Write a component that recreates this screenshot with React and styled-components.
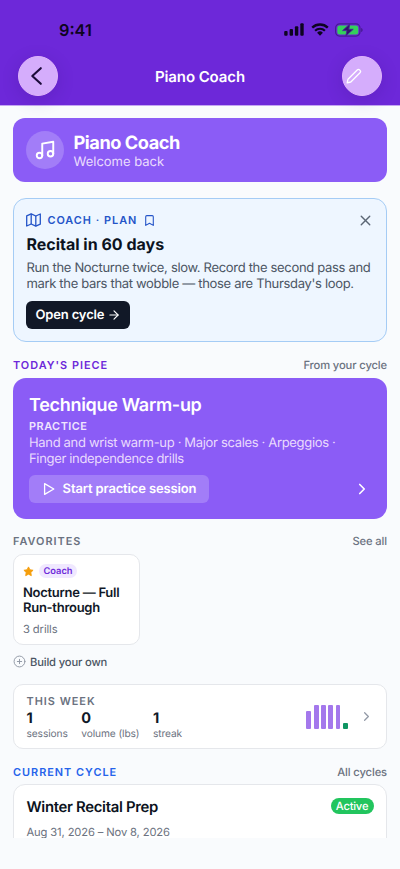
import React from "react";
import styled, { createGlobalStyle } from "styled-components";
import {
  ArrowRight,
  Bookmark,
  ChevronRight,
  CirclePlus,
  Music,
  X,
} from "lucide-react";

const GlobalStyle = createGlobalStyle`
  * {
    box-sizing: border-box;
  }

  body {
    margin: 0;
    background: #f9fbfd;
    font-family: Inter, "Liberation Sans", sans-serif;
    text-rendering: geometricPrecision;
    -webkit-font-smoothing: antialiased;
  }

  h1, h2, h3, p {
    margin: 0;
  }

  button {
    font-family: inherit;
    text-rendering: inherit;
    border: 0;
    padding: 0;
  }

  svg {
    display: block;
    flex-shrink: 0;
  }
`;

const Screen = styled.div`
  display: flex;
  flex-direction: column;
  width: 400px;
  height: 869px;
  overflow: hidden;
  background: #f9fbfd;
`;

const Header = styled.header`
  flex-shrink: 0;
  height: 106px;
  background: #6d28d9;
  border-bottom: 1px solid #c4a6f2;
`;

const StatusBar = styled.div`
  display: flex;
  align-items: center;
  justify-content: space-between;
  height: 56px;
  padding: 3px 37px 0 59px;
  color: #0d0420;
`;

const Clock = styled.span`
  font-size: 16.3px;
  font-weight: 600;
`;

const StatusIcons = styled.div`
  display: flex;
  align-items: center;
  gap: 6px;
`;

const NavBar = styled.div`
  display: flex;
  align-items: center;
  justify-content: space-between;
  height: 40.6px;
  padding: 0 18px;
`;

const NavTitle = styled.h1`
  color: #fff;
  font-size: 15px;
  font-weight: 600;
  letter-spacing: -0.1px;
`;

const RoundButton = styled.button`
  display: flex;
  align-items: center;
  justify-content: ${(props) => (props.$start ? "flex-start" : "center")};
  width: 40px;
  height: 40px;
  padding-left: ${(props) => (props.$start ? "3px" : "0")};
  border: 1px solid #e0b4fb;
  border-radius: 50%;
  background: #d5adfc;
  color: ${(props) => (props.$start ? "#fff" : "#1c0a3a")};
  box-shadow: 0 4px 18px rgba(40, 10, 90, 0.16);
`;

const Content = styled.main`
  display: flex;
  flex-direction: column;
  height: 732px;
  padding: 12px 13px 0;
  overflow: hidden;
`;

const Banner = styled.section`
  display: flex;
  align-items: center;
  flex-shrink: 0;
  gap: 10px;
  height: 64px;
  padding: 0 12.5px;
  border-radius: 12px;
  background: #8b5cf6;
  color: #fff;
`;

const BannerIcon = styled.div`
  display: flex;
  align-items: center;
  justify-content: center;
  width: 38px;
  height: 38px;
  border-radius: 50%;
  background: #a27df8;
`;

const BannerCopy = styled.div`
  padding-top: 2px;
`;

const BannerTitle = styled.h2`
  font-size: 18.2px;
  font-weight: 700;
  line-height: 21px;
  letter-spacing: -0.45px;
`;

const BannerText = styled.p`
  color: #eadcfd;
  font-size: 13px;
  line-height: 16px;
`;

const PlanCard = styled.section`
  flex-shrink: 0;
  height: 144px;
  margin-top: 16px;
  padding: 12px 12.4px;
  border: 1px solid #a5ccf5;
  border-radius: 13px;
  background: #eef6ff;
`;

const PlanTop = styled.div`
  display: flex;
  align-items: center;
  height: 18px;
  color: #2454c8;

  svg:last-child {
    margin-left: auto;
    color: #5b6675;
  }
`;

const Overline = styled.span`
  color: ${(props) => props.$color || "#6b7280"};
  font-size: 10.9px;
  font-weight: 600;
  line-height: 14px;
  letter-spacing: ${(props) => props.$tracking || "1px"};
`;

const PlanLabel = styled(Overline)`
  margin: 0 6px 0 6px;
`;

const PlanTitle = styled.h2`
  margin-top: 5px;
  color: #0b1220;
  font-size: 16px;
  font-weight: 700;
  line-height: 20px;
`;

const PlanText = styled.p`
  margin-top: 7px;
  color: #4b5563;
  font-size: 13px;
  line-height: 15.5px;
  letter-spacing: -0.32px;
  white-space: nowrap;
`;

const DarkButton = styled.button`
  display: flex;
  align-items: center;
  justify-content: center;
  gap: 3px;
  width: 104px;
  height: 28px;
  margin-top: 8.5px;
  border-radius: 6px;
  background: #111827;
  color: #fff;
  font-size: 13px;
  font-weight: 600;
  letter-spacing: -0.15px;
`;

const SectionHead = styled.div`
  display: flex;
  align-items: center;
  justify-content: space-between;
  flex-shrink: 0;
  height: 14px;
  margin-top: 15.5px;
`;

const SectionLink = styled.span`
  color: #6b7280;
  font-size: 11.2px;
  font-weight: 500;
  letter-spacing: -0.12px;
`;

const PieceCard = styled.section`
  flex-shrink: 0;
  height: 141px;
  margin-top: 6px;
  padding: 17.5px 16px 0;
  border-radius: 13px;
  background: #8b5cf6;
  color: #fff;
`;

const PieceTitle = styled.h2`
  font-size: 18px;
  font-weight: 600;
  line-height: 21px;
  letter-spacing: -0.3px;
`;

const PieceText = styled.p`
  color: #e9dafd;
  font-size: 13px;
  line-height: 15.5px;
  letter-spacing: -0.33px;
  white-space: nowrap;
`;

const PieceKind = styled(Overline)`
  display: block;
  margin: 3px 0;
`;

const PieceActions = styled.div`
  display: flex;
  align-items: center;
  justify-content: space-between;
  margin-top: 8px;
`;

const StartButton = styled.button`
  display: flex;
  align-items: center;
  gap: 7px;
  width: 180px;
  height: 28px;
  padding-left: 12.6px;
  border-radius: 6px;
  background: #a27df8;
  color: #fff;
  font-size: 13px;
  font-weight: 600;
  letter-spacing: -0.15px;
  white-space: nowrap;
`;

const FavoriteCard = styled.section`
  flex-shrink: 0;
  width: 127px;
  height: 91px;
  margin-top: 5.5px;
  padding: 9.5px 9px;
  border: 1px solid #e5e7eb;
  border-radius: 10px;
  background: #fff;
`;

const FavoriteTop = styled.div`
  display: flex;
  align-items: center;
  gap: 5px;
  height: 14px;
`;

const CoachTag = styled.span`
  height: 14px;
  padding: 0 4.5px;
  border-radius: 7px;
  background: #f0e8ff;
  color: #6d28d9;
  font-size: 9.3px;
  font-weight: 600;
  line-height: 15px;
`;

const FavoriteTitle = styled.h3`
  margin-top: 7.5px;
  color: #111827;
  font-size: 13px;
  font-weight: 600;
  line-height: 15.5px;
  letter-spacing: -0.27px;
`;

const FavoriteMeta = styled.p`
  margin-top: 5px;
  color: #6b7280;
  font-size: 11.2px;
  line-height: 14px;
  letter-spacing: -0.1px;
`;

const BuildRow = styled.div`
  display: flex;
  align-items: center;
  flex-shrink: 0;
  gap: 4px;
  height: 14px;
  margin-top: 10px;
  color: #4b5563;
  font-size: 11.2px;
  font-weight: 500;
  letter-spacing: -0.15px;

  svg {
    color: #9299a6;
  }
`;

const WeekCard = styled.section`
  display: flex;
  align-items: center;
  flex-shrink: 0;
  height: 65px;
  margin-top: 15px;
  padding: 0 12.5px;
  border: 1px solid #e5e7eb;
  border-radius: 10px;
  background: #fff;
`;

const WeekInfo = styled.div`
  display: flex;
  flex-direction: column;
  flex: 1;
  padding-top: 2px;
`;

const Stats = styled.div`
  display: flex;
  gap: 13.5px;
  padding-top: 2px;
`;

const StatValue = styled.div`
  color: #111827;
  font-size: 14.5px;
  font-weight: 700;
  line-height: 18px;
`;

const StatLabel = styled.div`
  color: #6b7280;
  font-size: 10.2px;
  line-height: 13px;
  letter-spacing: -0.1px;
`;

const Bars = styled.div`
  display: flex;
  align-items: flex-end;
  gap: 2.4px;
  height: 24px;
  margin: 1.5px 10.8px 0 0;
`;

const Bar = styled.span`
  width: 4.9px;
  height: ${(props) => props.$height}px;
  border-radius: 1px;
  background: ${(props) => (props.$current ? "#0f9663" : "#a478ec")};
`;

const CycleCard = styled.section`
  flex-shrink: 0;
  height: 90px;
  margin-top: 5px;
  padding: 12px 12.5px;
  border: 1px solid #e5e7eb;
  border-radius: 12px;
  background: #fff;
`;

const CycleHead = styled(SectionHead)`
  margin-top: 16px;
`;

const CycleTop = styled.div`
  display: flex;
  align-items: center;
  justify-content: space-between;
  height: 20px;
`;

const CycleTitle = styled.h3`
  color: #0b1220;
  font-size: 14.9px;
  font-weight: 600;
  letter-spacing: -0.32px;
`;

const ActiveTag = styled.span`
  width: 43px;
  height: 16px;
  margin-top: -2px;
  border-radius: 8px;
  background: #22c55e;
  color: #fff;
  font-size: 11.2px;
  font-weight: 500;
  line-height: 16px;
  letter-spacing: -0.2px;
  text-align: center;
`;

const CycleDates = styled.p`
  margin-top: 8px;
  color: #6b7280;
  font-size: 11.2px;
  line-height: 14px;
  letter-spacing: -0.13px;
`;

const SignalIcon = () => (
  <svg width="21" height="13" viewBox="0 0 21 13" fill="currentColor">
    <rect x="0.2" y="8" width="3.4" height="4.7" rx="1" />
    <rect x="5.6" y="6" width="3.4" height="6.7" rx="1" />
    <rect x="10.9" y="3.3" width="3.4" height="9.4" rx="1" />
    <rect x="16.3" y="0.3" width="3.4" height="12.4" rx="1" />
  </svg>
);

const WifiIcon = () => (
  <svg width="18" height="13" viewBox="0 0 18 13" fill="none" stroke="currentColor">
    <path d="M1.2 4.6a11.4 11.4 0 0 1 15.6 0" strokeWidth="2.4" />
    <path d="M4.1 7.7a7.1 7.1 0 0 1 9.8 0" strokeWidth="2.2" />
    <path d="M9 12.7 6.1 9.8a4.1 4.1 0 0 1 5.8 0z" fill="currentColor" stroke="none" />
  </svg>
);

const BatteryIcon = () => (
  <svg width="28" height="14" viewBox="0 0 28 14">
    <rect x="0.6" y="0.9" width="24.4" height="12.2" rx="4" fill="none" stroke="#481b95" strokeWidth="1.2" />
    <rect x="2.3" y="2.6" width="21" height="8.8" rx="2.5" fill="#34d05c" />
    <path d="M26.2 5v4c.9-.3 1.4-1.1 1.4-2s-.5-1.7-1.4-2z" fill="#431a8c" />
    <path
      d="M14.8 1 7.6 7.6h4.3L10.8 13l7.4-6.7h-4.4z"
      fill="#31106d"
      stroke="#4c1f9c"
      strokeWidth="0.9"
    />
  </svg>
);

const BackIcon = () => (
  <svg
    width="20"
    height="20"
    viewBox="0 0 20 20"
    fill="none"
    stroke="currentColor"
    strokeWidth="2.1"
    strokeLinecap="round"
    strokeLinejoin="round"
  >
    <path d="M12.8 2.2 4.3 10l8.5 7.8" />
  </svg>
);

const PencilIcon = () => (
  <svg
    width="16"
    height="16"
    viewBox="0 0 16 16"
    fill="none"
    stroke="currentColor"
    strokeWidth="1.3"
    strokeLinejoin="round"
  >
    <path d="M1.2 14.8 2 11.2 11.2 2a1.7 1.7 0 0 1 2.4 0l.4.4a1.7 1.7 0 0 1 0 2.4L4.8 14z" />
  </svg>
);

const MapIcon = () => (
  <svg
    width="15"
    height="14"
    viewBox="0 0 15 14"
    fill="none"
    stroke="currentColor"
    strokeWidth="1.3"
    strokeLinejoin="round"
  >
    <path d="M.7 2.8 5.2.8l4.6 2.2 4.5-2v10.2l-4.5 2L5.2 11l-4.5 2z" />
    <path d="M5.2.8V11M9.8 3v10.2" />
  </svg>
);

const PlayIcon = () => (
  <svg
    width="14"
    height="14"
    viewBox="0 0 14 14"
    fill="none"
    stroke="currentColor"
    strokeWidth="1.3"
    strokeLinejoin="round"
  >
    <path d="M2.6 1.6 11.8 7l-9.2 5.4z" />
  </svg>
);

const StarIcon = () => (
  <svg width="11" height="11" viewBox="0 0 24 24" fill="#f59e0b" stroke="#f59e0b" strokeWidth="2" strokeLinejoin="round">
    <path d="m12 2 3.1 6.3 6.9 1-5 4.9 1.2 6.8-6.2-3.2L5.8 21 7 14.2 2 9.3l6.9-1z" />
  </svg>
);

const stats = [
  { value: "1", label: "sessions" },
  { value: "0", label: "volume (lbs)" },
  { value: "1", label: "streak" },
];

const weekBars = [18, 24, 24, 24, 24, 6];

const App = () => {
  return (
    <Screen>
      <GlobalStyle />
      <Header>
        <StatusBar>
          <Clock>9:41</Clock>
          <StatusIcons>
            <SignalIcon />
            <WifiIcon />
            <BatteryIcon />
          </StatusIcons>
        </StatusBar>
        <NavBar>
          <RoundButton aria-label="Back">
            <BackIcon />
          </RoundButton>
          <NavTitle>Piano Coach</NavTitle>
          <RoundButton $start aria-label="Edit">
            <PencilIcon />
          </RoundButton>
        </NavBar>
      </Header>

      <Content>
        <Banner>
          <BannerIcon>
            <Music size={22} strokeWidth={2.1} />
          </BannerIcon>
          <BannerCopy>
            <BannerTitle>Piano Coach</BannerTitle>
            <BannerText>Welcome back</BannerText>
          </BannerCopy>
        </Banner>

        {/* Coach plan */}
        <PlanCard>
          <PlanTop>
            <MapIcon />
            <PlanLabel $color="#2454c8">COACH · PLAN</PlanLabel>
            <Bookmark size={13} strokeWidth={2} />
            <X size={17} strokeWidth={1.9} />
          </PlanTop>
          <PlanTitle>Recital in 60 days</PlanTitle>
          <PlanText>
            Run the Nocturne twice, slow. Record the second pass and
            <br />
            mark the bars that wobble — those are Thursday's loop.
          </PlanText>
          <DarkButton>
            Open cycle
            <ArrowRight size={14} strokeWidth={2} />
          </DarkButton>
        </PlanCard>

        {/* Today's piece */}
        <SectionHead>
          <Overline $color="#6d28d9">TODAY'S PIECE</Overline>
          <SectionLink>From your cycle</SectionLink>
        </SectionHead>
        <PieceCard>
          <PieceTitle>Technique Warm-up</PieceTitle>
          <PieceKind $color="#f0e5fe" $tracking="0.5px">
            PRACTICE
          </PieceKind>
          <PieceText>
            Hand and wrist warm-up · Major scales · Arpeggios ·
            <br />
            Finger independence drills
          </PieceText>
          <PieceActions>
            <StartButton>
              <PlayIcon />
              Start practice session
            </StartButton>
            <ChevronRight size={18} strokeWidth={2.2} />
          </PieceActions>
        </PieceCard>

        {/* Favorites */}
        <SectionHead>
          <Overline>FAVORITES</Overline>
          <SectionLink>See all</SectionLink>
        </SectionHead>
        <FavoriteCard>
          <FavoriteTop>
            <StarIcon />
            <CoachTag>Coach</CoachTag>
          </FavoriteTop>
          <FavoriteTitle>
            Nocturne — Full
            <br />
            Run-through
          </FavoriteTitle>
          <FavoriteMeta>3 drills</FavoriteMeta>
        </FavoriteCard>
        <BuildRow>
          <CirclePlus size={13} strokeWidth={1.8} />
          Build your own
        </BuildRow>

        {/* Weekly summary */}
        <WeekCard>
          <WeekInfo>
            <Overline>THIS WEEK</Overline>
            <Stats>
              {stats.map((stat) => (
                <div key={stat.label}>
                  <StatValue>{stat.value}</StatValue>
                  <StatLabel>{stat.label}</StatLabel>
                </div>
              ))}
            </Stats>
          </WeekInfo>
          <Bars>
            {weekBars.map((height, i) => (
              <Bar key={i} $height={height} $current={i === weekBars.length - 1} />
            ))}
          </Bars>
          <ChevronRight size={15} strokeWidth={2} color="#9299a6" />
        </WeekCard>

        {/* Current cycle */}
        <CycleHead>
          <Overline $color="#2563eb">CURRENT CYCLE</Overline>
          <SectionLink>All cycles</SectionLink>
        </CycleHead>
        <CycleCard>
          <CycleTop>
            <CycleTitle>Winter Recital Prep</CycleTitle>
            <ActiveTag>Active</ActiveTag>
          </CycleTop>
          <CycleDates>Aug 31, 2026 – Nov 8, 2026</CycleDates>
        </CycleCard>
      </Content>
    </Screen>
  );
};

export default App;
